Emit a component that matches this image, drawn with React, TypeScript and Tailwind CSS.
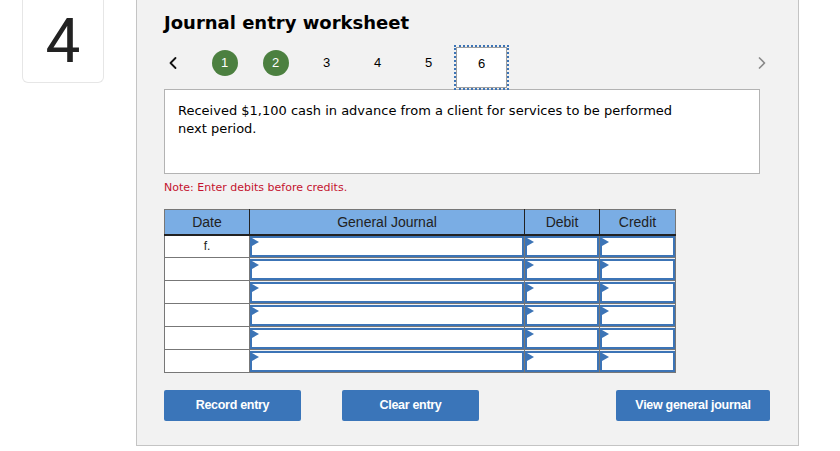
import { ChevronLeft, ChevronRight } from "lucide-react";

const steps = [1, 2, 3, 4, 5, 6];
const completed = [1, 2];
const current = 6;
const rows = ["f.", "", "", "", "", ""];

function InputCell() {
  return (
    <td className="border border-[#777] p-0">
      <div className="relative h-[21px] border-2 border-[#3c74b6] bg-white">
        <span className="absolute left-0 top-0 h-0 w-0 border-y-[4px] border-l-[7px] border-y-transparent border-l-[#3c74b6]" />
      </div>
    </td>
  );
}

export default function App() {
  return (
    <div className="flex h-[451px] w-[840px] overflow-hidden bg-white" style={{ fontFamily: "Arial, 'Liberation Sans', sans-serif" }}>
      <div className="ml-[22px] flex h-[83px] w-[82px] items-center justify-center rounded-b-md border border-t-0 border-[#e6e6e6]">
        <span className="font-['Roboto',sans-serif] text-[62px] leading-none text-[#222]">4</span>
      </div>

      <div className="ml-[32px] flex h-[446px] w-[663px] flex-col border-x border-b border-[#c4c4c4] bg-[#f2f2f2] pl-[27px] pr-[28px]">
        <h1 className="mt-[11px] font-['DejaVu_Sans',sans-serif] text-[18px] font-bold leading-[23px] text-black">
          Journal entry worksheet
        </h1>

        <div className="mt-[11px] flex h-[36px] items-center">
          <div className="flex w-[35px] items-center">
            <ChevronLeft className="ml-[-1px] h-[20px] w-[20px] text-[#111]" strokeWidth={2.2} />
          </div>
          {steps.map((s) =>
            completed.includes(s) ? (
              <div key={s} className="flex w-[51px] items-center justify-center">
                <span className="flex h-[26px] w-[26px] items-center justify-center rounded-full bg-[#4c8040] text-[13px] text-white">
                  {s}
                </span>
              </div>
            ) : s === current ? (
              <div key={s} className="relative z-10 flex h-[45px] w-[55px] self-start border-2 border-dotted border-[#3c74b6]">
                <span className="flex h-full w-full justify-center border border-[#a0a0a0] bg-white pt-[8px] text-[13px] leading-[16px] text-black">
                  {s}
                </span>
              </div>
            ) : (
              <div key={s} className="flex w-[51px] items-center justify-center text-[13px] text-black">
                {s}
              </div>
            )
          )}
          <ChevronRight className="ml-auto mr-[-2px] h-[20px] w-[20px] text-[#8a8a8a]" strokeWidth={2} />
        </div>

        <div className="mt-[8px] h-[85px] w-[596px] border border-[#b3b3b3] bg-white px-[13px] pt-[12px] font-['DejaVu_Sans',sans-serif] text-[13px] leading-[18px] text-black">
          Received $1,100 cash in advance from a client for services to be performed
          <br />
          next period.
        </div>

        <p className="mt-[7px] font-['DejaVu_Sans',sans-serif] text-[11px] leading-[14px] text-[#c4122f]">
          Note: Enter debits before credits.
        </p>

        <table className="mt-[14px] w-[511px] table-fixed border-collapse border border-[#777]">
          <colgroup>
            <col className="w-[85px]" />
            <col className="w-[275px]" />
            <col className="w-[75px]" />
            <col className="w-[76px]" />
          </colgroup>
          <thead>
            <tr className="h-[25px] bg-[#7aade4] text-[14px] text-[#222]">
              <th className="border-b-2 border-r border-b-[#222] border-r-[#222] pt-[1px] font-normal">Date</th>
              <th className="border-b-2 border-r border-b-[#222] border-r-[#222] pt-[1px] font-normal">General Journal</th>
              <th className="border-b-2 border-r border-b-[#222] border-r-[#222] pt-[1px] font-normal">Debit</th>
              <th className="border-b-2 border-b-[#222] pt-[1px] font-normal">Credit</th>
            </tr>
          </thead>
          <tbody>
            {rows.map((d, i) => (
              <tr key={i} className="h-[23px]">
                <td className="border border-[#777] bg-white p-0 text-center align-top text-[12px] leading-[20px] text-[#222]">{d}</td>
                <InputCell />
                <InputCell />
                <InputCell />
              </tr>
            ))}
          </tbody>
        </table>

        <div className="mt-[17px] flex items-center">
          <button className="h-[31px] w-[137px] rounded-[2px] bg-[#3a75b9] text-[12.5px] font-bold tracking-[-0.3px] text-white">
            Record entry
          </button>
          <button className="ml-[41px] h-[31px] w-[137px] rounded-[2px] bg-[#3a75b9] text-[12.5px] font-bold tracking-[-0.3px] text-white">
            Clear entry
          </button>
          <button className="ml-auto h-[31px] w-[154px] rounded-[2px] bg-[#3a75b9] text-[12.5px] font-bold tracking-[-0.3px] text-white">
            View general journal
          </button>
        </div>
      </div>
    </div>
  );
}
